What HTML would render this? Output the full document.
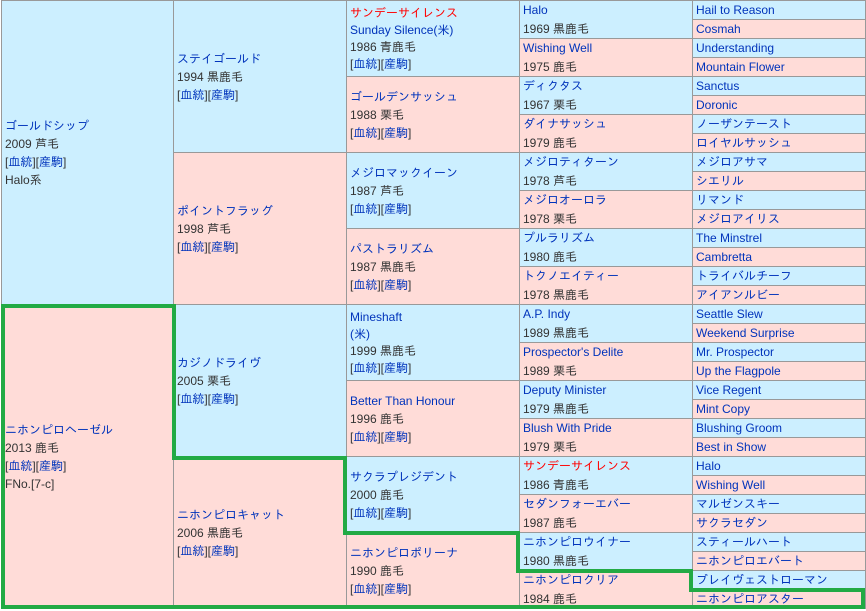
<!DOCTYPE html>
<html><head><meta charset="utf-8"><style>
body{margin:0;width:866px;height:611px;background:#fff;overflow:hidden;position:relative;font-family:"Liberation Sans","IPAGothic","Noto Sans CJK JP",sans-serif;font-size:12px;}
#t{position:absolute;left:1px;top:0;width:865px;height:609px;background:#999;}
.c{position:absolute;box-sizing:border-box;display:flex;flex-direction:column;justify-content:center;padding-left:3px;line-height:18px;color:#333;white-space:nowrap;overflow:hidden}
.m{background:#ccefff}.f{background:#ffdcd8}
.n{color:#0033bb}.r{color:#ff0000}
.k{color:#0033bb}
.c4{line-height:19px}
.c5{line-height:18px}
svg{position:absolute;left:0;top:0}
</style></head><body><div id="t">
<!-- col1 -->
<div class="c m" style="left:1px;top:1px;width:171px;height:303px"><span class="n">ゴールドシップ</span><span>2009 芦毛</span><span>[<span class="k">血統</span>][<span class="k">産駒</span>]</span><span>Halo系</span></div>
<div class="c f" style="left:1px;top:305px;width:171px;height:303px"><span class="n">ニホンピロヘーゼル</span><span>2013 鹿毛</span><span>[<span class="k">血統</span>][<span class="k">産駒</span>]</span><span>FNo.[7-c]</span></div>
<!-- col2 -->
<div class="c m" style="left:173px;top:1px;width:172px;height:151px"><span class="n">ステイゴールド</span><span>1994 黒鹿毛</span><span>[<span class="k">血統</span>][<span class="k">産駒</span>]</span></div>
<div class="c f" style="left:173px;top:153px;width:172px;height:151px"><span class="n">ポイントフラッグ</span><span>1998 芦毛</span><span>[<span class="k">血統</span>][<span class="k">産駒</span>]</span></div>
<div class="c m" style="left:173px;top:305px;width:172px;height:151px"><span class="n">カジノドライヴ</span><span>2005 栗毛</span><span>[<span class="k">血統</span>][<span class="k">産駒</span>]</span></div>
<div class="c f" style="left:173px;top:457px;width:172px;height:151px"><span class="n">ニホンピロキャット</span><span>2006 黒鹿毛</span><span>[<span class="k">血統</span>][<span class="k">産駒</span>]</span></div>
<!-- col3 -->
<div class="c m" style="left:346px;top:1px;width:172px;height:75px;line-height:17px"><span class="r">サンデーサイレンス</span><span class="n">Sunday Silence(米)</span><span>1986 青鹿毛</span><span>[<span class="k">血統</span>][<span class="k">産駒</span>]</span></div>
<div class="c f" style="left:346px;top:77px;width:172px;height:75px"><span class="n">ゴールデンサッシュ</span><span>1988 栗毛</span><span>[<span class="k">血統</span>][<span class="k">産駒</span>]</span></div>
<div class="c m" style="left:346px;top:153px;width:172px;height:75px"><span class="n">メジロマックイーン</span><span>1987 芦毛</span><span>[<span class="k">血統</span>][<span class="k">産駒</span>]</span></div>
<div class="c f" style="left:346px;top:229px;width:172px;height:75px"><span class="n">パストラリズム</span><span>1987 黒鹿毛</span><span>[<span class="k">血統</span>][<span class="k">産駒</span>]</span></div>
<div class="c m" style="left:346px;top:305px;width:172px;height:75px;line-height:17px"><span class="n">Mineshaft</span><span class="n">(米)</span><span>1999 黒鹿毛</span><span>[<span class="k">血統</span>][<span class="k">産駒</span>]</span></div>
<div class="c f" style="left:346px;top:381px;width:172px;height:75px"><span class="n">Better Than Honour</span><span>1996 鹿毛</span><span>[<span class="k">血統</span>][<span class="k">産駒</span>]</span></div>
<div class="c m" style="left:346px;top:457px;width:172px;height:75px"><span class="n">サクラプレジデント</span><span>2000 鹿毛</span><span>[<span class="k">血統</span>][<span class="k">産駒</span>]</span></div>
<div class="c f" style="left:346px;top:533px;width:172px;height:75px"><span class="n">ニホンピロポリーナ</span><span>1990 鹿毛</span><span>[<span class="k">血統</span>][<span class="k">産駒</span>]</span></div>
<!-- col4 -->
<div class="c c4 m" style="left:519px;top:1px;width:172px;height:37px"><span class="n">Halo</span><span>1969 黒鹿毛</span></div>
<div class="c c4 f" style="left:519px;top:39px;width:172px;height:37px"><span class="n">Wishing Well</span><span>1975 鹿毛</span></div>
<div class="c c4 m" style="left:519px;top:77px;width:172px;height:37px"><span class="n">ディクタス</span><span>1967 栗毛</span></div>
<div class="c c4 f" style="left:519px;top:115px;width:172px;height:37px"><span class="n">ダイナサッシュ</span><span>1979 鹿毛</span></div>
<div class="c c4 m" style="left:519px;top:153px;width:172px;height:37px"><span class="n">メジロティターン</span><span>1978 芦毛</span></div>
<div class="c c4 f" style="left:519px;top:191px;width:172px;height:37px"><span class="n">メジロオーロラ</span><span>1978 栗毛</span></div>
<div class="c c4 m" style="left:519px;top:229px;width:172px;height:37px"><span class="n">プルラリズム</span><span>1980 鹿毛</span></div>
<div class="c c4 f" style="left:519px;top:267px;width:172px;height:37px"><span class="n">トクノエイティー</span><span>1978 黒鹿毛</span></div>
<div class="c c4 m" style="left:519px;top:305px;width:172px;height:37px"><span class="n">A.P. Indy</span><span>1989 黒鹿毛</span></div>
<div class="c c4 f" style="left:519px;top:343px;width:172px;height:37px"><span class="n">Prospector's Delite</span><span>1989 栗毛</span></div>
<div class="c c4 m" style="left:519px;top:381px;width:172px;height:37px"><span class="n">Deputy Minister</span><span>1979 黒鹿毛</span></div>
<div class="c c4 f" style="left:519px;top:419px;width:172px;height:37px"><span class="n">Blush With Pride</span><span>1979 栗毛</span></div>
<div class="c c4 m" style="left:519px;top:457px;width:172px;height:37px"><span class="r">サンデーサイレンス</span><span>1986 青鹿毛</span></div>
<div class="c c4 f" style="left:519px;top:495px;width:172px;height:37px"><span class="n">セダンフォーエバー</span><span>1987 鹿毛</span></div>
<div class="c c4 m" style="left:519px;top:533px;width:172px;height:37px"><span class="n">ニホンピロウイナー</span><span>1980 黒鹿毛</span></div>
<div class="c c4 f" style="left:519px;top:571px;width:172px;height:37px"><span class="n">ニホンピロクリア</span><span>1984 鹿毛</span></div>
<!-- col5 -->
<div class="c c5 m" style="left:692px;top:1px;width:172px;height:18px"><span class="n">Hail to Reason</span></div>
<div class="c c5 f" style="left:692px;top:20px;width:172px;height:18px"><span class="n">Cosmah</span></div>
<div class="c c5 m" style="left:692px;top:39px;width:172px;height:18px"><span class="n">Understanding</span></div>
<div class="c c5 f" style="left:692px;top:58px;width:172px;height:18px"><span class="n">Mountain Flower</span></div>
<div class="c c5 m" style="left:692px;top:77px;width:172px;height:18px"><span class="n">Sanctus</span></div>
<div class="c c5 f" style="left:692px;top:96px;width:172px;height:18px"><span class="n">Doronic</span></div>
<div class="c c5 m" style="left:692px;top:115px;width:172px;height:18px"><span class="n">ノーザンテースト</span></div>
<div class="c c5 f" style="left:692px;top:134px;width:172px;height:18px"><span class="n">ロイヤルサッシュ</span></div>
<div class="c c5 m" style="left:692px;top:153px;width:172px;height:18px"><span class="n">メジロアサマ</span></div>
<div class="c c5 f" style="left:692px;top:172px;width:172px;height:18px"><span class="n">シエリル</span></div>
<div class="c c5 m" style="left:692px;top:191px;width:172px;height:18px"><span class="n">リマンド</span></div>
<div class="c c5 f" style="left:692px;top:210px;width:172px;height:18px"><span class="n">メジロアイリス</span></div>
<div class="c c5 m" style="left:692px;top:229px;width:172px;height:18px"><span class="n">The Minstrel</span></div>
<div class="c c5 f" style="left:692px;top:248px;width:172px;height:18px"><span class="n">Cambretta</span></div>
<div class="c c5 m" style="left:692px;top:267px;width:172px;height:18px"><span class="n">トライバルチーフ</span></div>
<div class="c c5 f" style="left:692px;top:286px;width:172px;height:18px"><span class="n">アイアンルビー</span></div>
<div class="c c5 m" style="left:692px;top:305px;width:172px;height:18px"><span class="n">Seattle Slew</span></div>
<div class="c c5 f" style="left:692px;top:324px;width:172px;height:18px"><span class="n">Weekend Surprise</span></div>
<div class="c c5 m" style="left:692px;top:343px;width:172px;height:18px"><span class="n">Mr. Prospector</span></div>
<div class="c c5 f" style="left:692px;top:362px;width:172px;height:18px"><span class="n">Up the Flagpole</span></div>
<div class="c c5 m" style="left:692px;top:381px;width:172px;height:18px"><span class="n">Vice Regent</span></div>
<div class="c c5 f" style="left:692px;top:400px;width:172px;height:18px"><span class="n">Mint Copy</span></div>
<div class="c c5 m" style="left:692px;top:419px;width:172px;height:18px"><span class="n">Blushing Groom</span></div>
<div class="c c5 f" style="left:692px;top:438px;width:172px;height:18px"><span class="n">Best in Show</span></div>
<div class="c c5 m" style="left:692px;top:457px;width:172px;height:18px"><span class="n">Halo</span></div>
<div class="c c5 f" style="left:692px;top:476px;width:172px;height:18px"><span class="n">Wishing Well</span></div>
<div class="c c5 m" style="left:692px;top:495px;width:172px;height:18px"><span class="n">マルゼンスキー</span></div>
<div class="c c5 f" style="left:692px;top:514px;width:172px;height:18px"><span class="n">サクラセダン</span></div>
<div class="c c5 m" style="left:692px;top:533px;width:172px;height:18px"><span class="n">スティールハート</span></div>
<div class="c c5 f" style="left:692px;top:552px;width:172px;height:18px"><span class="n">ニホンピロエバート</span></div>
<div class="c c5 m" style="left:692px;top:571px;width:172px;height:18px"><span class="n">ブレイヴェストローマン</span></div>
<div class="c c5 f" style="left:692px;top:590px;width:172px;height:18px"><span class="n">ニホンピロアスター</span></div>
</div>
<svg width="866" height="611"><path d="M3,607 L3,306 L174,306 L174,458 L345,458 L345,533 L518,533 L518,571 L691,571 L691,590 L863,590 L863,607 Z" fill="none" stroke="#22aa44" stroke-width="4"/></svg>
</body></html>
